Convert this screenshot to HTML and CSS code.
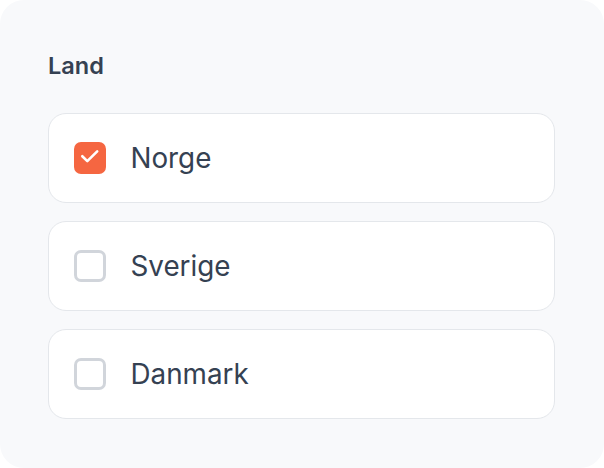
FILE: index.html
```html
<!DOCTYPE html>
<html lang="no">
<head>
  <meta charset="UTF-8" />
  <meta name="viewport" content="width=device-width, initial-scale=1.0"/>
  <title>Land</title>
  <link rel="stylesheet" href="styles.css">
</head>
<body>
  <div class="card">
    <div class="label">Land</div>

    <div class="options">
      <label class="option">
        <span class="box checked">
          <svg width="32" height="32" viewBox="0 0 32 32">
            <path d="M8.3 14.2 L13.3 19.1 L23.2 9.4" fill="none" stroke="#fff" stroke-width="2.6" stroke-linecap="round" stroke-linejoin="round"/>
          </svg>
        </span>
        <span class="name">Norge</span>
      </label>
      <label class="option">
        <span class="box"></span>
        <span class="name">Sverige</span>
      </label>
      <label class="option">
        <span class="box"></span>
        <span class="name">Danmark</span>
      </label>
    </div>
  </div>
</body>
</html>
```

FILE: styles.css
```css
html {
  background: #fff;
}

body {
  margin: 0;
  font-family: 'Inter', 'Noto Sans', sans-serif;
}

.card {
  width: 604px;
  height: 468px;
  box-sizing: border-box;
  background: #f8f9fb;
  border-radius: 24px;
  padding: 49px 49px 0 48px;
}

.label {
  font-size: 23.5px;
  line-height: 33px;
  font-weight: 600;
  color: #354152;
  margin-bottom: 31px;
}

.options {
  display: flex;
  flex-direction: column;
  gap: 18px;
}

.option {
  display: flex;
  align-items: center;
  gap: 25px;
  height: 90px;
  box-sizing: border-box;
  padding-left: 24.5px;
  background: #fff;
  border: 1.5px solid #e4e7eb;
  border-radius: 18px;
}

.box {
  width: 32px;
  height: 32px;
  box-sizing: border-box;
  border: 3px solid #d1d5db;
  border-radius: 7px;
  background: #fff;
  flex-shrink: 0;
}

.box.checked {
  border: none;
  background: #f56641;
}

.box svg {
  display: block;
}

.name {
  font-size: 27.8px;
  color: #354152;
}
```
